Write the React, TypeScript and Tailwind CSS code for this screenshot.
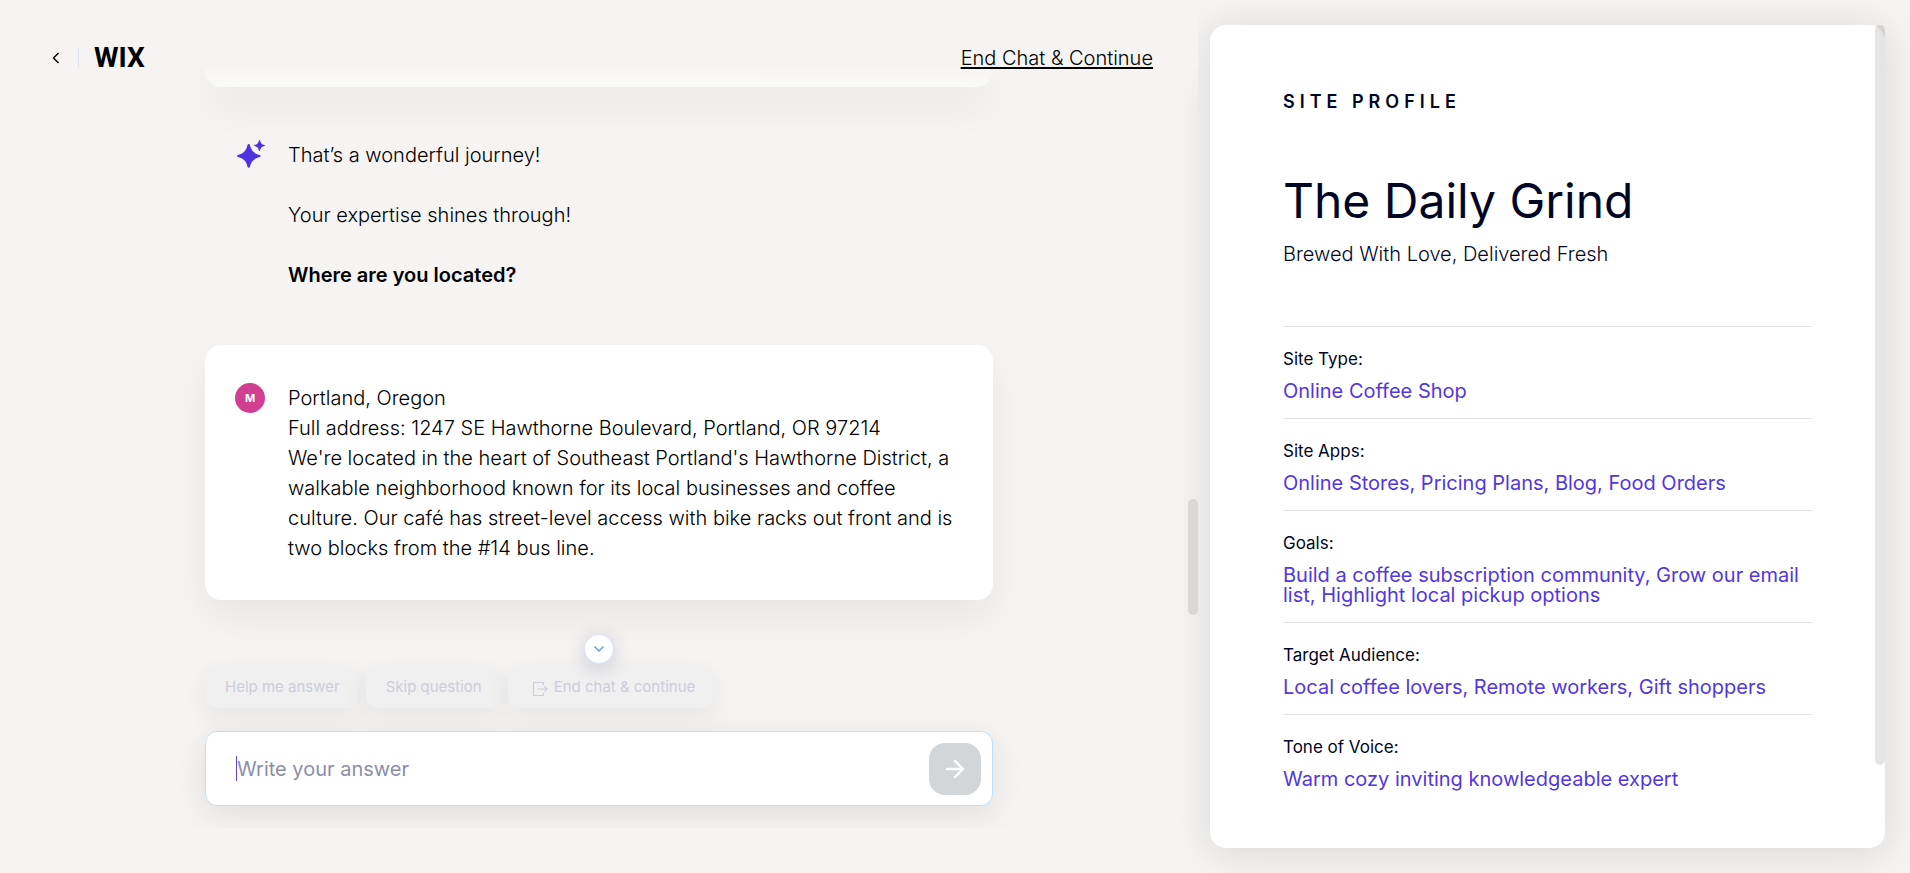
import { useState } from 'react'
import clsx from 'clsx'

interface ProfileField {
  label: string
  value: string
}

const PROFILE_FIELDS: ProfileField[] = [
  { label: 'Site Type:', value: 'Online Coffee Shop' },
  { label: 'Site Apps:', value: 'Online Stores, Pricing Plans, Blog, Food Orders' },
  {
    label: 'Goals:',
    value: 'Build a coffee subscription community, Grow our email list, Highlight local pickup options',
  },
  { label: 'Target Audience:', value: 'Local coffee lovers, Remote workers, Gift shoppers' },
  { label: 'Tone of Voice:', value: 'Warm cozy inviting knowledgeable expert' },
]

const ANSWER_LINES = [
  'Portland, Oregon',
  'Full address: 1247 SE Hawthorne Boulevard, Portland, OR 97214',
  "We're located in the heart of Southeast Portland's Hawthorne District, a walkable neighborhood known for its local businesses and coffee culture. Our café has street-level access with bike racks out front and is two blocks from the #14 bus line.",
]

function SparklesIcon() {
  return (
    <svg viewBox="0 0 28 28" className="w-7 h-7" fill="#4f32e0" aria-hidden="true">
      <path d="M11.700 4c.6 0 1 .4 1.200 1.100 1.400 5.300 3.400 8.200 9.700 9.900.700.200 1.100.5 1.100 1s-.4.900-1.100 1.100c-6.300 1.800-8.300 4.200-9.700 9.600-.200.700-.6 1.100-1.200 1.100s-1-.4-1.200-1.100c-1.400-5.400-3.300-7.800-9.400-9.600C.4 16.900 0 16.500 0 16s.4-.8 1.100-1c6.100-1.700 8-4.600 9.400-9.900.2-.7.6-1.100 1.200-1.100z" />
      <path d="M22.500 0c.3 0 .5.200.6.500.7 2.800 1.400 3.700 4.400 4.600.3.100.5.200.5.500s-.2.400-.5.500c-3 .9-3.700 1.800-4.400 4.500-.1.300-.3.500-.6.500s-.5-.2-.6-.5c-.7-2.700-1.400-3.600-4.400-4.500-.3-.1-.5-.2-.5-.5s.2-.4.5-.5c3-.9 3.700-1.800 4.400-4.600.1-.3.300-.5.600-.5z" />
    </svg>
  )
}

function ExitIcon() {
  return (
    <svg viewBox="0 0 16 16" className="w-4 h-4 mt-1" fill="none" stroke="currentColor" strokeWidth="1.200" aria-hidden="true">
      <path d="M11.500 4V2a.5.5 0 0 0-.5-.5H2a.5.5 0 0 0-.5.5v12a.5.5 0 0 0 .5.5h9a.5.5 0 0 0 .5-.5v-2M5.500 8H15M12.500 5.500 15 8l-2.500 2.500" />
    </svg>
  )
}

interface ChipProps {
  label: string
  icon?: boolean
}

function Chip({ label, icon }: ChipProps) {
  return (
    <button
      type="button"
      className={clsx(
        'flex items-center gap-1.5 h-[42px] pr-[18px] rounded-[10px] bg-[#f0f0f0] text-[15px] text-[#cccdda] shadow-[0_8px_24px_rgba(60,40,60,0.07)]',
        icon ? 'pl-6' : 'pl-5',
      )}
    >
      {icon && <ExitIcon />}
      {label}
    </button>
  )
}

function Header() {
  return (
    <div className="absolute inset-x-0 top-0 z-10">
      <header className="flex items-center justify-between h-[68px] pt-12 pl-12 pr-[45px] bg-[#f5f4f2]">
        <div className="flex items-center">
          <button type="button" aria-label="Back" className="flex items-center justify-center w-4 h-5">
            <svg viewBox="0 0 8 12" className="w-2 h-3" fill="none" stroke="#000" strokeWidth="1.400">
              <path d="M6.500 1 1.500 6l5 5" />
            </svg>
          </button>
          <span className="w-px h-5 ml-3.5 mr-[15px] bg-[#dbe3ef]" />
          <span className="font-['Roboto',sans-serif] text-[28px] leading-5 font-bold text-black">WIX</span>
        </div>
        <a href="#continue" className="text-[20px] leading-5 font-light text-black underline decoration-2 underline-offset-2">
          End Chat &amp; Continue
        </a>
      </header>
      <div className="h-12 bg-linear-to-b from-[#f5f4f2]/85 to-[#f5f4f2]/0" />
    </div>
  )
}

function Messages() {
  return (
    <div className="flex flex-col justify-end w-full max-w-[788px] h-full mx-auto pb-[43px] text-[20px] leading-[30px] font-light text-black">
      <div className="shrink-0 h-24 rounded-2xl bg-white shadow-[0_18px_40px_rgba(0,0,0,0.06)]" />

      <div className="flex gap-[23px] px-[30px] pt-[53px] pb-[55px]">
        <div className="flex justify-end shrink-0 w-[30px]">
          <SparklesIcon />
        </div>
        <div className="flex flex-col gap-[30px]">
          <p>That’s a wonderful journey!</p>
          <p>Your expertise shines through!</p>
          <p className="font-semibold">Where are you located?</p>
        </div>
      </div>

      <div className="flex gap-[23px] pl-[30px] pr-9 pt-[38px] pb-[37px] rounded-2xl bg-white shadow-[0_18px_40px_rgba(0,0,0,0.06)]">
        <span className="flex items-center justify-center shrink-0 w-[30px] h-[30px] rounded-full bg-[#d13f90] text-[11px] font-bold text-white">
          M
        </span>
        <div>
          {ANSWER_LINES.map(line => (
            <p key={line}>{line}</p>
          ))}
        </div>
      </div>
    </div>
  )
}

function Composer() {
  const [answer, setAnswer] = useState('')

  return (
    <div className="overflow-hidden pt-[23px] pb-[22px]">
      <div className="w-full max-w-[788px] mx-auto">
        <div className="flex gap-2">
          <Chip label="Help me answer" />
          <Chip label="Skip question" />
          <Chip label="End chat & continue" icon />
        </div>
        <form
          onSubmit={e => e.preventDefault()}
          className="flex items-center h-[75px] mt-[23px] pl-[30px] pr-[11px] rounded-xl border border-[#bcdffb] bg-white shadow-[0_8px_32px_rgba(60,40,60,0.1)]"
        >
          <span className="w-px h-[25px] bg-[#5a48f0]" />
          <input
            type="text"
            aria-label="Write your answer"
            placeholder="Write your answer"
            value={answer}
            onChange={e => setAnswer(e.target.value)}
            className="flex-1 min-w-0 text-[20px] text-black outline-none placeholder:text-[#8b8ea9]"
          />
          <button
            type="submit"
            aria-label="Send"
            className="flex items-center justify-center w-[52px] h-[52px] rounded-2xl bg-[#d2d6d9]"
          >
            <svg viewBox="0 0 20 20" className="w-5 h-5" fill="none" stroke="#fff" strokeWidth="2.400" strokeLinecap="round" strokeLinejoin="round">
              <path d="M2 10h16M10 2l8 8-8 8" />
            </svg>
          </button>
        </form>
      </div>
    </div>
  )
}

function SiteProfile() {
  return (
    <aside className="relative h-full pt-16 px-[73px] rounded-2xl bg-white text-[#000624] shadow-[0_4px_40px_rgba(40,20,40,0.13)]">
      <h2 className="text-[18px] leading-[26px] tracking-[5px] font-semibold">SITE PROFILE</h2>
      <h1 className="mt-14 text-[48px] leading-[60px] font-normal">The Daily Grind</h1>
      <p className="mt-2.5 text-[20px] leading-[26px] font-light">Brewed With Love, Delivered Fresh</p>
      <dl className="mt-[59px]">
        {PROFILE_FIELDS.map(field => (
          <div key={field.label} className="pt-[22px] pb-[17px] border-t border-[#e1e2e6]">
            <dt className="text-[17px] leading-5">{field.label}</dt>
            <dd className="mt-3 text-[20px] leading-5 text-[#5237e0]">{field.value}</dd>
          </div>
        ))}
      </dl>
      <div className="absolute top-0 right-0 w-2.5 h-[740px] rounded-full bg-black/10" />
    </aside>
  )
}

export default function App() {
  return (
    <div className="grid grid-cols-[1198fr_712fr] h-screen overflow-hidden bg-[#f5f4f2] font-['Inter',sans-serif]">
      <main className="relative z-10 flex flex-col min-w-0 h-screen">
        <Header />
        <section className="flex-1 min-h-0 overflow-hidden">
          <Messages />
        </section>
        <div className="relative pb-[45px]">
          <button
            type="button"
            aria-label="Scroll to latest"
            className="absolute z-10 -top-[9px] left-1/2 -translate-x-1/2 flex items-center justify-center w-[30px] h-[30px] rounded-full border border-[#d6e6fe] bg-white shadow-[0_4px_20px_rgba(40,20,80,0.2)]"
          >
            <svg viewBox="0 0 12 8" className="w-3 h-2" fill="none" stroke="#5a9bf8" strokeWidth="1.400">
              <path d="M1.500 1.500 6 6l4.500-4.500" />
            </svg>
          </button>
          <Composer />
        </div>
        <div className="absolute right-0 top-[499px] w-2.5 h-[116px] rounded-full bg-[#d9d8d7]" />
      </main>
      <div className="min-w-0 h-screen py-[25px] pl-3 pr-[25px]">
        <SiteProfile />
      </div>
    </div>
  )
}
